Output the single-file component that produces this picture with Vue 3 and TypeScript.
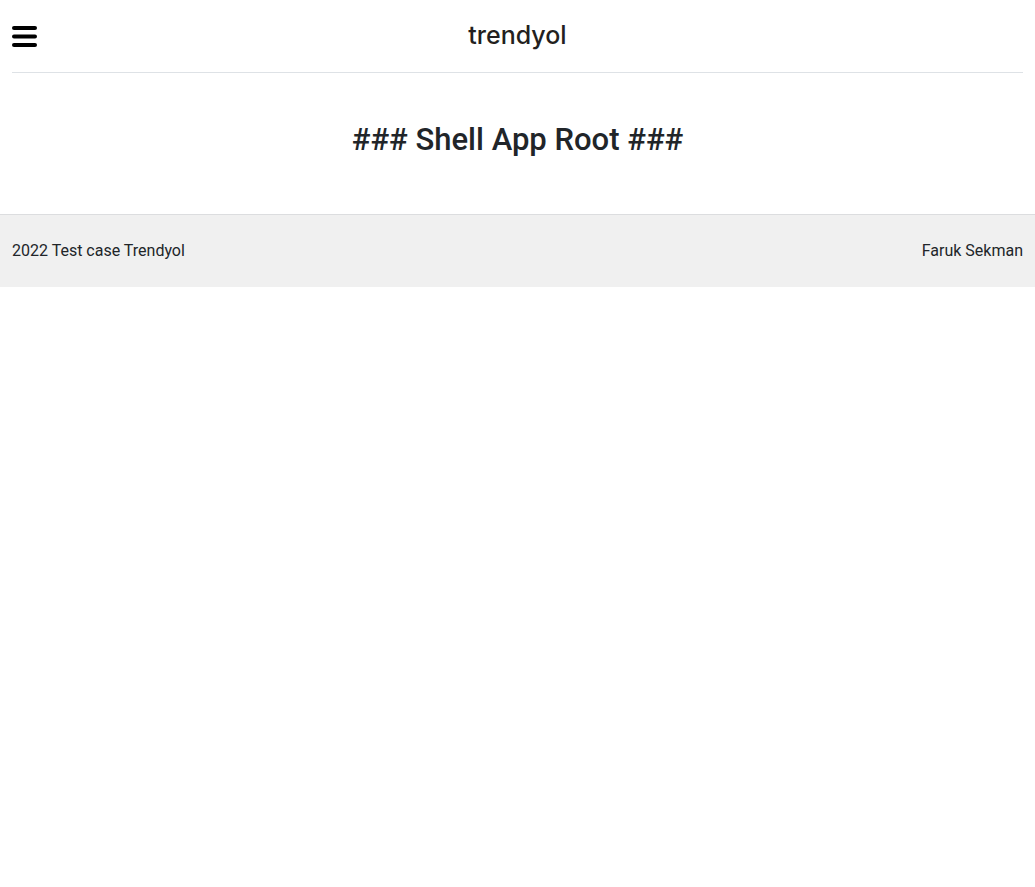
<script setup lang="ts">
const bars: number[] = [4, 21, 38]
const title = '### Shell App Root ###'
const credit = '2022 Test case Trendyol'
const author = 'Faruk Sekman'
</script>

<template>
  <div class="shell">
    <header class="header">
      <button class="menu" type="button" aria-label="Open menu">
        <svg class="menu-icon" viewBox="0 0 50 42" aria-hidden="true">
          <line v-for="y in bars" :key="y" x1="4" :y1="y" x2="46" :y2="y" />
        </svg>
      </button>
      <a class="brand" href="#">trendyol</a>
    </header>
    <main class="content">
      <h1 class="title">{{ title }}</h1>
    </main>
    <footer class="footer">
      <span>{{ credit }}</span>
      <span>{{ author }}</span>
    </footer>
  </div>
</template>

<style>
body {
  margin: 0;
  background: #fff;
}
</style>

<style scoped>
.shell {
  font-family: Roboto, "Liberation Sans", sans-serif;
  font-size: 16px;
  line-height: 24px;
  color: #212529;
}

.header {
  display: grid;
  grid-template-columns: 1fr auto 1fr;
  align-items: center;
  height: 72px;
  margin: 0 12px;
  border-bottom: 1px solid #dee2e6;
}

.menu {
  display: flex;
  justify-self: start;
  padding: 0;
  border: 0;
  background: none;
  cursor: pointer;
}

.menu-icon {
  width: 25px;
  height: 21px;
}

.menu-icon line {
  stroke: #000;
  stroke-width: 8;
  stroke-linecap: round;
}

.brand {
  padding-bottom: 2px;
  color: #231f20;
  font-family: Inter, "Liberation Sans", sans-serif;
  font-size: 25px;
  font-weight: 500;
  line-height: 32px;
  text-decoration: none;
}

.content {
  padding: 48px 12px 56px;
}

.title {
  margin: 0;
  font-size: 31px;
  font-weight: 500;
  line-height: 37px;
  text-align: center;
}

.footer {
  display: flex;
  justify-content: space-between;
  padding: 24px 12px;
  border-top: 1px solid #dcdddf;
  background: #f0f0f0;
}
</style>
